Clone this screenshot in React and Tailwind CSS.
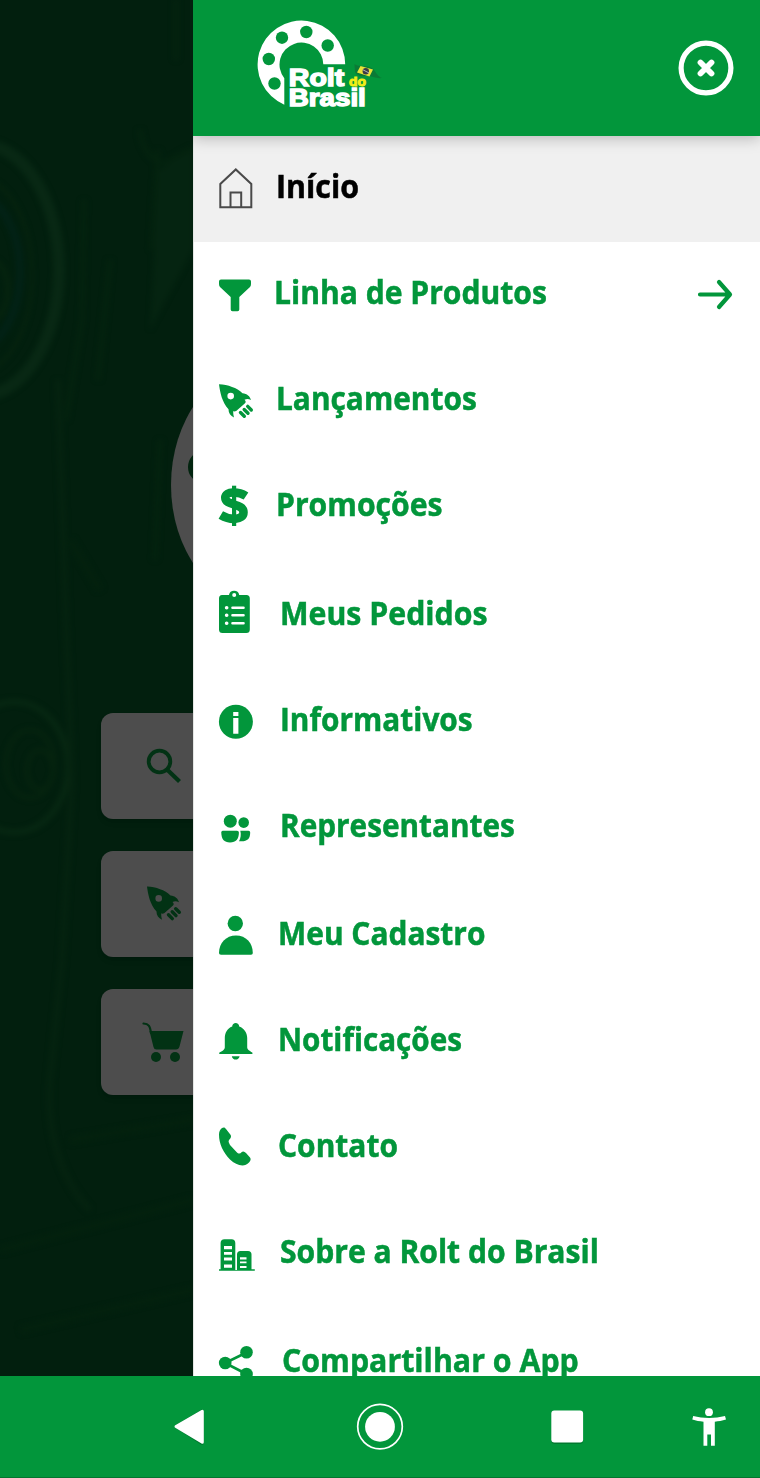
import React from "react";

const G = "#02963b";

const Rocket = () => (
  <g>
    <path
      fillRule="evenodd"
      d="M0 0C9 0.500 18 3.500 23.500 9C28 9.500 31 12 32 15.800C29.500 14.300 27.500 14.500 25.500 15.500C27 17 27 18 26 19L17.500 26.500C16 27.500 15 27.500 14.300 26.800C14 29 14.500 31 15 33.200C11.500 31.500 9.500 29 9.500 25C3 18 1 8 0 0ZM11.700 8.600A3.300 3.300 0 1 0 11.700 15.200A3.300 3.300 0 1 0 11.700 8.600Z"
    />
    <path d="M21.500 28.300L25.300 32.100M25.200 25.300L29 29.100M28.700 22.200L32.300 25.800" stroke="currentColor" strokeWidth="3.400" strokeLinecap="round" />
  </g>
);

const icons = {
  home: (
    <g fill="none" stroke="#4a4a4a" strokeWidth="2">
      <path d="M220.300 207.200V184L235.800 169.400L251.300 184V207.200Z" />
      <path d="M230.500 207V192.500H241.200V207" />
    </g>
  ),
  filter: (
    <path d="M221 279.500H249Q251 279.500 251 281.500V284Q251 286 250 287L239.300 297V309.500Q239.300 311.300 237.500 311.300H232.500Q230.700 311.300 230.700 309.500V297L220 287Q219 286 219 284V281.500Q219 279.500 221 279.500Z" />
  ),
  rocket: (
    <g transform="translate(219 384.200)">
      <Rocket />
    </g>
  ),
  dollar: (
    <g>
      <path d="M232 485.700H236.200V526H232Z" />
      <path
        d="M246 496C239 491.500 225.300 490.500 225.300 497.800C225.300 506 243.500 503 243.500 512.200C243.500 520.500 230 520.500 220.800 515"
        fill="none"
        stroke="currentColor"
        strokeWidth="8.600"
      />
    </g>
  ),
  clipboard: (
    <g>
      <path
        fillRule="evenodd"
        d="M222 595H229A5.200 5.200 0 0 1 239.200 595H246.500Q249.800 595 249.800 598.500V629.500Q249.800 633 246.300 633H222.500Q219 633 219 629.500V598.500Q219 595 222 595ZM234.200 592.900A2 2 0 1 0 234.200 596.900A2 2 0 1 0 234.200 592.900Z"
      />
      <g stroke="#fff" strokeWidth="2.600" strokeLinecap="round">
        <path d="M232.500 607.700H243.500M232.500 615.300H243.500M232.500 623.200H243.500" />
        <path d="M226.600 607.700H226.700M226.600 615.300H226.700M226.600 623.200H226.700" strokeWidth="3.600" />
      </g>
    </g>
  ),
  info: (
    <g>
      <circle cx="235.900" cy="721.800" r="17" />
      <path fill="#fff" d="M233.200 712H238.400V715.900H233.200ZM233.200 718H238.400V733.800H233.200Z" />
    </g>
  ),
  people: (
    <g>
      <circle cx="230.300" cy="821.200" r="6.500" />
      <circle cx="243.700" cy="822.600" r="5.300" />
      <path d="M222.700 830.700H237Q238.900 830.700 238.900 832.500C238.900 839 236 842.400 230 842.400C224 842.400 221.300 839 221.300 832.500Q221.300 830.700 222.700 830.700Z" />
      <path d="M240.300 830.700H248.500Q250.200 830.700 250.200 832.500C250.200 838.500 247.500 841.300 241.500 841.300H239C240.700 838.500 241.300 834 240.300 830.700Z" />
    </g>
  ),
  user: (
    <g>
      <circle cx="235.300" cy="923.500" r="7.700" />
      <path d="M219 953C219 943 226 935.500 236 935.500S252.800 943 252.800 953Q252.800 954.800 251 954.800H221Q219 954.800 219 953Z" />
    </g>
  ),
  bell: (
    <g>
      <path d="M232.200 1026.500C232.200 1021.700 239.200 1021.700 239.200 1026.500C244.500 1028.500 247.200 1033 247.200 1038V1047.500C247.500 1050.200 250.500 1051 252.700 1053Q252.700 1054 251.500 1054H220Q219 1054 219 1053C221.500 1051 224.500 1050.500 224.800 1047.500V1038C224.800 1033 227 1028.500 232.200 1026.500Z" />
      <path d="M231.800 1056.200H239.600C238.800 1060.700 232.600 1060.700 231.800 1056.200Z" />
    </g>
  ),
  phone: (
    <path d="M222 1128C224 1127 225 1127.500 226 1129L230.700 1135C231.500 1137 230.800 1138 229 1140C228 1141.500 229 1143 230 1145L236.500 1152C238.500 1154 240.200 1154 241.500 1152.200C243 1151 244.500 1151.500 246 1153L250 1157.500C251.300 1159.500 250.500 1160.500 249 1162.500C244 1168 236 1165 230 1159.500C223 1152 219 1144 219 1134.500C219 1131.500 220 1129.500 222 1128Z" />
  ),
  building: (
    <g>
      <path d="M220.600 1270V1243Q220.600 1239.200 224.500 1239.200H231.500Q235.300 1239.200 235.300 1243V1270H237V1254.500Q237 1251 240.500 1251H248Q251.500 1251 251.500 1254.500V1269.200H254.800V1270.700H219V1269.200H220.600Z" />
      <path fill="#fff" d="M224 1246H232V1249.200H224ZM224 1252H232V1254.700H224ZM224 1257.500H232V1260.500H224ZM224 1264.500H232V1267.800H224ZM240 1257.300H246.500V1259.500H240ZM240 1261.500H246.500V1263.200H240ZM240 1266H246.500V1268H240Z" />
    </g>
  ),
  share: (
    <g>
      <path d="M246.500 1352.500L225 1363L246.500 1374" fill="none" stroke="currentColor" strokeWidth="2.600" />
      <circle cx="246.500" cy="1352.300" r="6.300" />
      <circle cx="225.200" cy="1363" r="6.300" />
      <circle cx="246.500" cy="1374" r="6.300" />
    </g>
  ),
};

const items = [
  { label: "Início", icon: "home", box: "215 136 44 106", row: "h-[106px] bg-[#f0f0f0] text-black", text: "mt-[28px] ml-[17px] scale-x-[0.95]" },
  { label: "Linha de Produtos", icon: "filter", box: "215 242 44 106", row: "h-[106px]", text: "mt-[28px] ml-[15px] scale-x-[0.94]", arrow: true },
  { label: "Lançamentos", icon: "rocket", box: "215 348 44 106", row: "h-[106px]", text: "mt-[28px] ml-[17px] scale-x-[0.933]" },
  { label: "Promoções", icon: "dollar", box: "215 454 44 106", row: "h-[108px]", text: "mt-[28px] ml-[17px] scale-x-[0.942]" },
  { label: "Meus Pedidos", icon: "clipboard", box: "215 562 44 106", row: "h-[106px]", text: "mt-[29px] ml-[21px] scale-x-[0.946]" },
  { label: "Informativos", icon: "info", box: "215 668 44 106", row: "h-[106px]", text: "mt-[29px] ml-[21px] scale-x-[0.932]" },
  { label: "Representantes", icon: "people", box: "215 774 44 106", row: "h-[109px]", text: "mt-[29px] ml-[21px] scale-x-[0.93]" },
  { label: "Meu Cadastro", icon: "user", box: "215 883 44 106", row: "h-[106px]", text: "mt-[28px] ml-[19px] scale-x-[0.935]" },
  { label: "Notificações", icon: "bell", box: "215 989 44 106", row: "h-[106px]", text: "mt-[28px] ml-[19px] scale-x-[0.927]" },
  { label: "Contato", icon: "phone", box: "215 1095 44 106", row: "h-[106px]", text: "mt-[28px] ml-[19px] scale-x-[0.936]" },
  { label: "Sobre a Rolt do Brasil", icon: "building", box: "215 1201 44 106", row: "h-[109px]", text: "mt-[28px] ml-[21px] scale-x-[0.94]" },
  { label: "Compartilhar o App", icon: "share", box: "215 1310 44 106", row: "h-[106px]", text: "mt-[28px] ml-[23px] scale-x-[0.948]" },
];

function Logo() {
  return (
    <svg className="ml-[57px] h-[100px] w-[136px] shrink-0" viewBox="250 14 136 100" fill="#fff">
      <path d="M345.200 64.300A43.800 43.800 0 1 0 284.300 104.700V78.200A21.900 21.900 0 1 1 323.300 64.300Z" />
      <g fill={G}>
        <circle cx="268.800" cy="59" r="6.200" />
        <circle cx="282" cy="37.700" r="6.200" />
        <circle cx="306.300" cy="32" r="6.200" />
        <circle cx="327.700" cy="45.500" r="6.200" />
        <circle cx="274.500" cy="83.500" r="6.200" />
      </g>
      <g fontFamily="Liberation Sans, Arial, sans-serif" fontWeight="700" stroke="#fff" strokeWidth="1.400">
        <text x="288.800" y="86.400" fontSize="24" textLength="55.500" lengthAdjust="spacingAndGlyphs">Rolt</text>
        <text x="288.800" y="106" fontSize="23" textLength="77" lengthAdjust="spacingAndGlyphs">Brasil</text>
        <text x="349" y="86.300" fontSize="12" textLength="17" lengthAdjust="spacingAndGlyphs" fill="#f2ee16" stroke="#f2ee16" strokeWidth="0.900">do</text>
      </g>
      <path fill="#0b7a36" d="M354.500 64C360 68 367 64 373 69C376 72 378 77 382 78C376 79 370 75 365 76C360 77 357 75 355 72Z" />
      <path fill="#e8e337" d="M360.500 66L373 69.500L369.500 76.500L357 72.500Z" />
      <circle cx="365.800" cy="71.200" r="3.200" fill="#3b3b45" />
      <path d="M363 69.800L369 73" stroke="#cfcfcf" strokeWidth="0.800" />
    </svg>
  );
}

function Backdrop() {
  return (
    <svg className="absolute inset-0 h-[1376px] w-[193px]" viewBox="0 0 193 1376" fill="none">
      <defs>
        <filter id="soft" x="-20%" y="-20%" width="140%" height="140%" colorInterpolationFilters="sRGB">
          <feGaussianBlur stdDeviation="2.400" />
        </filter>
      </defs>
      <g filter="url(#soft)" stroke="#06240f">
        <path d="M158 170L193 148V250L150 330Z" fill="#052411" stroke="none" />
        <ellipse cx="-20" cy="270" rx="79" ry="126" strokeWidth="12" stroke="#082814" />
        <ellipse cx="-22" cy="275" rx="54" ry="97" strokeWidth="3" />
        <ellipse cx="-26" cy="272" rx="46" ry="77" strokeWidth="8" stroke="#022216" />
        <ellipse cx="-10" cy="290" rx="18" ry="30" strokeWidth="5" />
        <ellipse cx="14" cy="767" rx="54" ry="65" strokeWidth="6" stroke="#072712" />
        <ellipse cx="30" cy="764" rx="24" ry="34" strokeWidth="4" />
        <ellipse cx="40" cy="770" rx="13" ry="20" strokeWidth="4" />
        <path d="M58 380L66 620L72 780L62 960L50 1080C46 1130 60 1180 90 1210" strokeWidth="6" stroke="#052310" />
        <path d="M84 200L82 320L66 420M110 260L98 380M140 130C142 155 160 168 170 160L193 148M152 250L158 150M176 0V60M160 440L155 560" strokeWidth="5" stroke="#04230f" />
        <path d="M70 540L100 590M70 1140L193 1120M0 1250L193 1200M20 1330L193 1290" strokeWidth="8" stroke="#03210e" />
      </g>
      <ellipse cx="261" cy="485" rx="90" ry="119" fill="#4d4d4d" />
      <ellipse cx="201" cy="467" rx="13" ry="15" fill="#02240f" />
    </svg>
  );
}

function QuickCard({ children }) {
  return (
    <div className="flex h-[106px] w-[180px] items-center rounded-[12px] bg-[#4d4d4d] pl-[39px] text-[#023214] shadow-md">
      <svg className="h-[50px] w-[50px]" viewBox="140 0 50 50" fill="currentColor">
        {children}
      </svg>
    </div>
  );
}

export default function App() {
  return (
    <div className="flex h-[1478px] w-[760px] flex-col overflow-hidden bg-[#021f0e]">
      <div className="flex h-[1376px] shrink-0 overflow-hidden">
        <aside className="relative h-[1376px] w-[193px] shrink-0 overflow-hidden bg-[#021f0e]">
          <Backdrop />
          <div className="relative flex flex-col gap-[32px] pl-[101px] pt-[713px]">
            <QuickCard>
              <circle cx="159.500" cy="20.500" r="10.800" fill="none" stroke="currentColor" strokeWidth="3.800" />
              <path d="M167 28.500L179.500 40.500" stroke="currentColor" strokeWidth="4.200" />
            </QuickCard>
            <QuickCard>
              <g transform="translate(147 7.500)">
                <Rocket />
              </g>
            </QuickCard>
            <QuickCard>
              <path d="M149.500 14H183.500L179.500 29.500Q178.700 32.500 176 32.500H156.500Q154 32.500 153.500 30Z" />
              <path d="M143.500 6.500C148.500 7 150 8.500 151 16" fill="none" stroke="currentColor" strokeWidth="2.200" strokeLinecap="round" />
              <circle cx="156" cy="40" r="5" />
              <circle cx="175" cy="40" r="5" />
            </QuickCard>
          </div>
        </aside>
        <main className="flex h-[1376px] w-[567px] shrink-0 flex-col overflow-hidden bg-white">
          <header className="z-10 flex h-[136px] shrink-0 items-center justify-between bg-[#02963b] pr-[26px] shadow-[0_2px_14px_rgba(0,0,0,0.25)]">
            <div className="-mt-[8px]">
              <Logo />
            </div>
            <svg className="h-[56px] w-[56px]" viewBox="0 0 56 56" fill="none" stroke="#fff">
              <circle cx="28" cy="28" r="24.900" strokeWidth="5.200" />
              <path d="M22.500 22.500L33.500 33.500M33.500 22.500L22.500 33.500" strokeWidth="5.800" strokeLinecap="round" />
            </svg>
          </header>
          <nav className="flex flex-col border-l border-[#e4e6e4] text-[#02963b]">
            {items.map((it) => (
              <div key={it.label} className={`flex shrink-0 items-start pl-[21px] ${it.row}`}>
                <svg className="h-[106px] w-[44px] shrink-0 text-[#02963b]" viewBox={it.box} fill="currentColor">
                  {icons[it.icon]}
                </svg>
                <span
                  className={`origin-left whitespace-nowrap font-['Open_Sans','Noto_Sans',sans-serif] text-[32px] font-bold leading-[44px] [-webkit-text-stroke:0.5px_currentColor] ${it.text}`}
                >
                  {it.label}
                </span>
                {it.arrow && (
                  <svg className="ml-auto mr-[26px] mt-[36px] h-[34px] w-[38px] shrink-0" viewBox="0 0 38 34" fill="none" stroke="currentColor" strokeWidth="4.200" strokeLinecap="round" strokeLinejoin="round">
                    <path d="M4 16.500H34M23 4L34 16.500L23 29" />
                  </svg>
                )}
              </div>
            ))}
          </nav>
        </main>
      </div>
      <footer className="z-20 h-[102px] shrink-0 border-b border-[#04752f] bg-[#02963b]">
        <svg className="h-[101px] w-[760px]" viewBox="0 1376 760 101" fill="#fff">
          <g fill="#00000030">
            <path d="M176 1426.500L202 1411V1443.500Z" stroke="#00000030" strokeWidth="3" strokeLinejoin="round" />
            <rect x="551.500" y="1411.500" width="31.500" height="32.500" rx="3" />
          </g>
          <path d="M176 1426.500L202.300 1411.200V1442.300Z" stroke="#fff" strokeWidth="3" strokeLinejoin="round" />
          <circle cx="380" cy="1426.600" r="22.300" fill="none" stroke="#fff" strokeWidth="1.700" />
          <circle cx="380" cy="1426.800" r="14.900" />
          <rect x="551.300" y="1410.500" width="31.800" height="32" rx="3" />
          <circle cx="709" cy="1412.200" r="3.900" />
          <path d="M693.200 1416C703 1418.500 715 1418.500 725 1416L726 1419.500C722 1420.700 718.500 1421.300 714.800 1421.700V1445.800H711V1434.500H707.300V1445.800H703.500V1421.700C699.500 1421.300 696 1420.700 692.300 1419.500Z" />
        </svg>
      </footer>
    </div>
  );
}
